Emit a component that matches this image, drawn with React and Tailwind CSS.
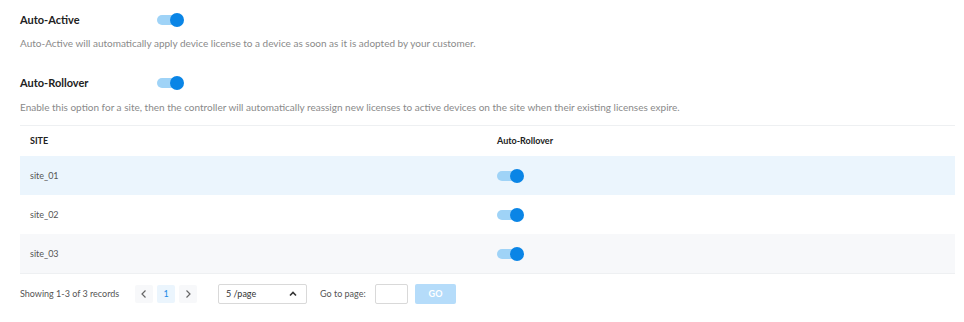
const Toggle = () => (
  <div className="relative h-[14px] w-[27px]">
    <div className="absolute left-0 top-[2px] h-[10px] w-[24px] rounded-full bg-[#9fd3f7]" />
    <div className="absolute right-0 top-0 h-[14px] w-[14px] rounded-full bg-[#0a85e6]" />
  </div>
);

const Chevron = ({ dir }) => (
  <svg width="10" height="10" viewBox="0 0 10 10" fill="none" stroke="#666" strokeWidth="1.2">
    {dir === 'left' && <path d="M6.5 1.5 3 5l3.5 3.5" />}
    {dir === 'right' && <path d="M3.5 1.5 7 5 3.5 8.5" />}
    {dir === 'up' && <path d="M2 6.5 5 3.5l3 3" strokeWidth="1.6" stroke="#333" />}
  </svg>
);

export default function App() {
  const sites = [
    { name: 'site_01', bg: 'bg-[#ebf5fd]' },
    { name: 'site_02', bg: 'bg-white' },
    { name: 'site_03', bg: 'bg-[#f7f8fa]' },
  ];

  return (
    <div className="h-[322px] w-[964px] bg-white font-['Lato',sans-serif] text-[#333]">
      <div className="pl-5 pr-[9px] pt-[13px]">
        {/* Auto-Active */}
        <div className="flex h-[14px] items-center">
          <div className="w-[137px] text-[11px] font-bold text-[#222]">Auto-Active</div>
          <Toggle />
        </div>
        <p className="mt-[9px] text-[10px] text-[#8a8a8a]">
          Auto-Active will automatically apply device license to a device as soon as it is adopted by your customer.
        </p>

        {/* Auto-Rollover */}
        <div className="mt-[25px] flex h-[14px] items-center">
          <div className="w-[137px] text-[11px] font-bold text-[#222]">Auto-Rollover</div>
          <Toggle />
        </div>
        <p className="mt-[10px] text-[10px] text-[#8a8a8a]">
          Enable this option for a site, then the controller will automatically reassign new licenses to active devices on the site when their existing licenses expire.
        </p>

        {/* Table */}
        <div className="mt-[10px] border-t border-b border-[#eef0f2]">
          <div className="flex h-[30px] items-center text-[9px] font-bold text-[#222]">
            <div className="w-[477px] pl-[10px]">SITE</div>
            <div>Auto-Rollover</div>
          </div>
          {sites.map((s) => (
            <div key={s.name} className={`flex h-[39px] items-center ${s.bg} text-[9px] text-[#555]`}>
              <div className="w-[477px] pl-[10px]">{s.name}</div>
              <Toggle />
            </div>
          ))}
        </div>

        {/* Footer */}
        <div className="mt-[10px] flex h-[20px] items-center text-[9px] text-[#555]">
          <span className="w-[115px]">Showing 1-3 of 3 records</span>
          <div className="flex items-center gap-[4px]">
            <div className="flex h-[18px] w-[18px] items-center justify-center rounded-[2px] bg-[#f7f8fa]">
              <Chevron dir="left" />
            </div>
            <div className="flex h-[18px] w-[18px] items-center justify-center rounded-[2px] bg-[#ebf5fd] text-[#1a8ae6]">
              1
            </div>
            <div className="flex h-[18px] w-[18px] items-center justify-center rounded-[2px] bg-[#f7f8fa]">
              <Chevron dir="right" />
            </div>
          </div>
          <div className="ml-[21px] flex h-[20px] w-[89px] items-center justify-between rounded-[2px] border border-[#d9d9d9] pl-[7px] pr-[8px] text-[#333]">
            <span>5 /page</span>
            <Chevron dir="up" />
          </div>
          <span className="ml-[13px] w-[50px]">Go to page:</span>
          <div className="ml-[5px] h-[20px] w-[33px] rounded-[2px] border border-[#d9d9d9]" />
          <div className="ml-[7px] flex h-[20px] w-[41px] items-center justify-center rounded-[2px] bg-[#b5dcfa] text-[9px] font-bold text-white">
            GO
          </div>
        </div>
      </div>
    </div>
  );
}
